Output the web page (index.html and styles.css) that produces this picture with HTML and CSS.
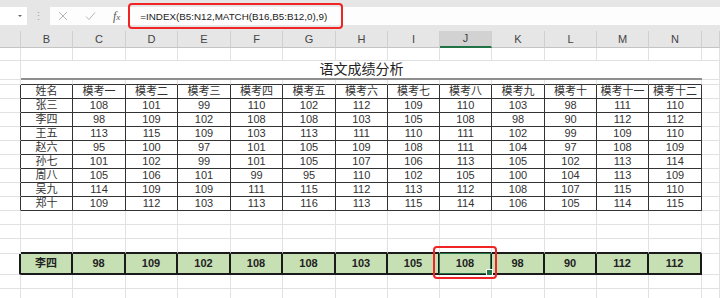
FILE: index.html
```html
<!DOCTYPE html>
<html lang="zh-CN">
<head>
    <meta charset="UTF-8">
    <title>语文成绩分析</title>
    <link rel="stylesheet" href="styles.css">
</head>
<body>
<div class="app">
    <div class="toolbar">
        <div class="namebox"><span class="caret"></span></div>
        <div class="grip">⋮</div>
        <div class="fbar">
            <svg class="fbtn cancel" width="10" height="10" viewBox="0 0 10 10"><path d="M1 1L9 9M9 1L1 9"/></svg>
            <svg class="fbtn enter" width="11" height="10" viewBox="0 0 11 10"><path d="M1 5.5L4 8.5L10 1.5"/></svg>
            <span class="fx"><i>f</i><span>x</span></span>
            <div class="formula">=INDEX(B5:N12,MATCH(B16,B5:B12,0),9)</div>
        </div>
    </div>

    <table class="sheet">
        <colgroup>
            <col class="w21">
            <col class="w52"><col class="w53"><col class="w52"><col class="w53"><col class="w52"><col class="w53">
            <col class="w52"><col class="w52"><col class="w52"><col class="w53"><col class="w52"><col class="w52"><col class="w53">
            <col class="w18">
        </colgroup>
        <tr class="heads">
            <th></th><th>B</th><th>C</th><th>D</th><th>E</th><th>F</th><th>G</th><th>H</th>
            <th>I</th><th class="cur">J</th><th>K</th><th>L</th><th>M</th><th>N</th><th></th>
        </tr>
        <tr class="r13"><td></td><td></td><td></td><td></td><td></td><td></td><td></td><td></td><td></td><td></td><td></td><td></td><td></td><td></td><td></td></tr>
        <tr class="title-row"><td></td><td class="title" colspan="13">语文成绩分析</td><td></td></tr>
        <tr class="spacer" id="spacer"></tr>
        <tbody id="scores"></tbody>
        <tr class="r14"><td></td><td></td><td></td><td></td><td></td><td></td><td></td><td></td><td></td><td></td><td></td><td></td><td></td><td></td><td></td></tr>
        <tr class="r14"><td></td><td></td><td></td><td></td><td></td><td></td><td></td><td></td><td></td><td></td><td></td><td></td><td></td><td></td><td></td></tr>
        <tr class="r14 above-result"><td></td><td class="edge"></td><td class="edge"></td><td class="edge"></td><td class="edge"></td><td class="edge"></td><td class="edge"></td><td class="edge"></td><td class="edge"></td><td class="edge"></td><td class="edge"></td><td class="edge"></td><td class="edge"></td><td class="edge"></td><td></td></tr>
        <tr class="result" id="result"></tr>
        <tr class="r14"><td></td><td></td><td></td><td></td><td></td><td></td><td></td><td></td><td></td><td></td><td></td><td></td><td></td><td></td><td></td></tr>
        <tr class="r14"><td></td><td></td><td></td><td></td><td></td><td></td><td></td><td></td><td></td><td></td><td></td><td></td><td></td><td></td><td></td></tr>
    </table>

    <div class="mark mark-formula"></div>
    <div class="mark mark-cell"></div>
</div>

<script>
    const header = ['姓名', '模考一', '模考二', '模考三', '模考四', '模考五', '模考六',
        '模考七', '模考八', '模考九', '模考十', '模考十一', '模考十二'];
    const rows = [
        ['张三', 108, 101, 99, 110, 102, 112, 109, 110, 103, 98, 111, 110],
        ['李四', 98, 109, 102, 108, 108, 103, 105, 108, 98, 90, 112, 112],
        ['王五', 113, 115, 109, 103, 113, 111, 110, 111, 102, 99, 109, 110],
        ['赵六', 95, 100, 97, 101, 105, 109, 108, 111, 104, 97, 108, 109],
        ['孙七', 101, 102, 99, 101, 105, 107, 106, 113, 105, 102, 113, 114],
        ['周八', 105, 106, 101, 99, 95, 110, 102, 105, 100, 104, 113, 109],
        ['吴九', 114, 109, 109, 111, 115, 112, 113, 112, 108, 107, 115, 110],
        ['郑十', 109, 112, 103, 113, 116, 113, 115, 114, 106, 105, 114, 115]
    ];

    function fillRow(tr, values, cls, selected) {
        tr.innerHTML = '<td class="lead"></td>' + values.map(function(v, i) {
            const sel = i === selected ? ' sel' : '';
            return '<td class="' + cls + sel + '">' + v + '</td>';
        }).join('') + '<td></td>';
    }

    // spacer row above the table carries its top border
    document.getElementById('spacer').innerHTML = '<td></td>' + header.map(function() {
        return '<td class="edge"></td>';
    }).join('') + '<td></td>';

    const body = document.getElementById('scores');
    [header].concat(rows).forEach(function(r) {
        const tr = document.createElement('tr');
        tr.className = 'r14 data';
        fillRow(tr, r, 'cell');
        body.appendChild(tr);
    });

    fillRow(document.getElementById('result'), rows[1], 'hit', 8);
</script>
</body>
</html>
```

FILE: styles.css
```css
* {
    box-sizing: border-box;
}

body {
    margin: 0;
    background-color: #ffffff;
    font-family: "Liberation Sans", "Noto Sans CJK SC", sans-serif;
    overflow: hidden;
}

.app {
    position: relative;
    width: 720px;
    height: 298px;
    overflow: hidden;
}

/* Formula bar */
.toolbar {
    display: flex;
    align-items: flex-start;
    height: 31px;
    padding-top: 7px;
    background-color: #e6e6e6;
}

.namebox {
    position: relative;
    width: 27px;
    height: 18px;
    background-color: #ffffff;
}

.caret {
    position: absolute;
    left: 18px;
    top: 8px;
    border-left: 2px solid transparent;
    border-right: 2px solid transparent;
    border-top: 2px solid #666;
}

.grip {
    width: 23px;
    height: 18px;
    line-height: 18px;
    text-align: center;
    font-size: 11px;
    color: #a6a6a6;
}

.fbar {
    flex: 1;
    display: flex;
    align-items: center;
    height: 18px;
    background-color: #fdfdfd;
}

.fbtn {
    fill: none;
    stroke: #b5b5b5;
    stroke-width: 1;
}

.cancel {
    margin-left: 8px;
}

.enter {
    margin-left: 17px;
}

.fx {
    margin-left: 17px;
    font-family: "Liberation Serif", serif;
    font-size: 12px;
    color: #595959;
}

.fx span {
    font-style: italic;
    font-size: 9px;
}

.formula {
    margin-left: 20px;
    font-size: 9.8px;
    color: #222;
    white-space: nowrap;
}

/* Grid */
.sheet {
    table-layout: fixed;
    width: 720px;
    border-collapse: separate;
    border-spacing: 0;
    font-size: 11px;
    color: #333;
}

.w21 { width: 21px; }
.w52 { width: 52px; }
.w53 { width: 53px; }
.w18 { width: 18px; }

.sheet td,
.sheet th {
    padding: 0;
    border-right: 1px solid #e1e1e1;
    border-bottom: 1px solid #e1e1e1;
    text-align: center;
    white-space: nowrap;
    overflow: visible;
}

.heads th {
    height: 16px;
    line-height: 15px;
    font-weight: normal;
    font-size: 11px;
    color: #444;
    background-color: #e6e6e6;
    border-right-color: #cfcfcf;
    border-bottom-color: #c4c4c4;
}

.heads th.cur {
    background-color: #d2d2d2;
    border-bottom: 2px solid #217346;
}

.r13 td {
    height: 13px;
}

.r14 td {
    height: 14px;
    line-height: 13px;
}

.title-row td {
    height: 19px;
}

.title-row .title {
    font-size: 14px;
    line-height: 17px;
    color: #222;
    border-right: none;
    border-bottom: 2px solid #8f8f8f;
}

.spacer td {
    height: 5px;
}

.sheet td.edge {
    border-bottom: 1px solid #333;
}

.above-result td {
    height: 15px;
}

.sheet .above-result td.edge {
    border-bottom: 2px solid #1a1a1a;
}

.data td.lead {
    border-right: 1px solid #333;
}

.sheet td.cell {
    border-right: 1px solid #333;
    border-bottom: 1px solid #333;
}

/* Lookup result row */
.result td {
    height: 21px;
    line-height: 19px;
}

.result td.lead {
    border-right: 2px solid #1a1a1a;
}

.sheet td.hit {
    background-color: #c6e0b4;
    font-weight: bold;
    color: #222;
    border-right: 2px solid #1a1a1a;
    border-bottom: 2px solid #1a1a1a;
}

.hit.sel {
    position: relative;
}

.hit.sel::after {
    content: "";
    position: absolute;
    left: -1px;
    top: -1px;
    right: -1px;
    bottom: -1px;
    border: 1px solid #217346;
}

.hit.sel::before {
    content: "";
    position: absolute;
    right: -3px;
    bottom: -3px;
    width: 5px;
    height: 5px;
    background-color: #217346;
    border: 1px solid #fff;
    z-index: 1;
}

/* Red annotations */
.mark {
    position: absolute;
    border: 2px solid #f02424;
    border-radius: 4px;
}

.mark-formula {
    left: 128px;
    top: 3px;
    width: 215px;
    height: 26px;
}

.mark-cell {
    left: 433px;
    top: 246px;
    width: 64px;
    height: 33px;
}
```
